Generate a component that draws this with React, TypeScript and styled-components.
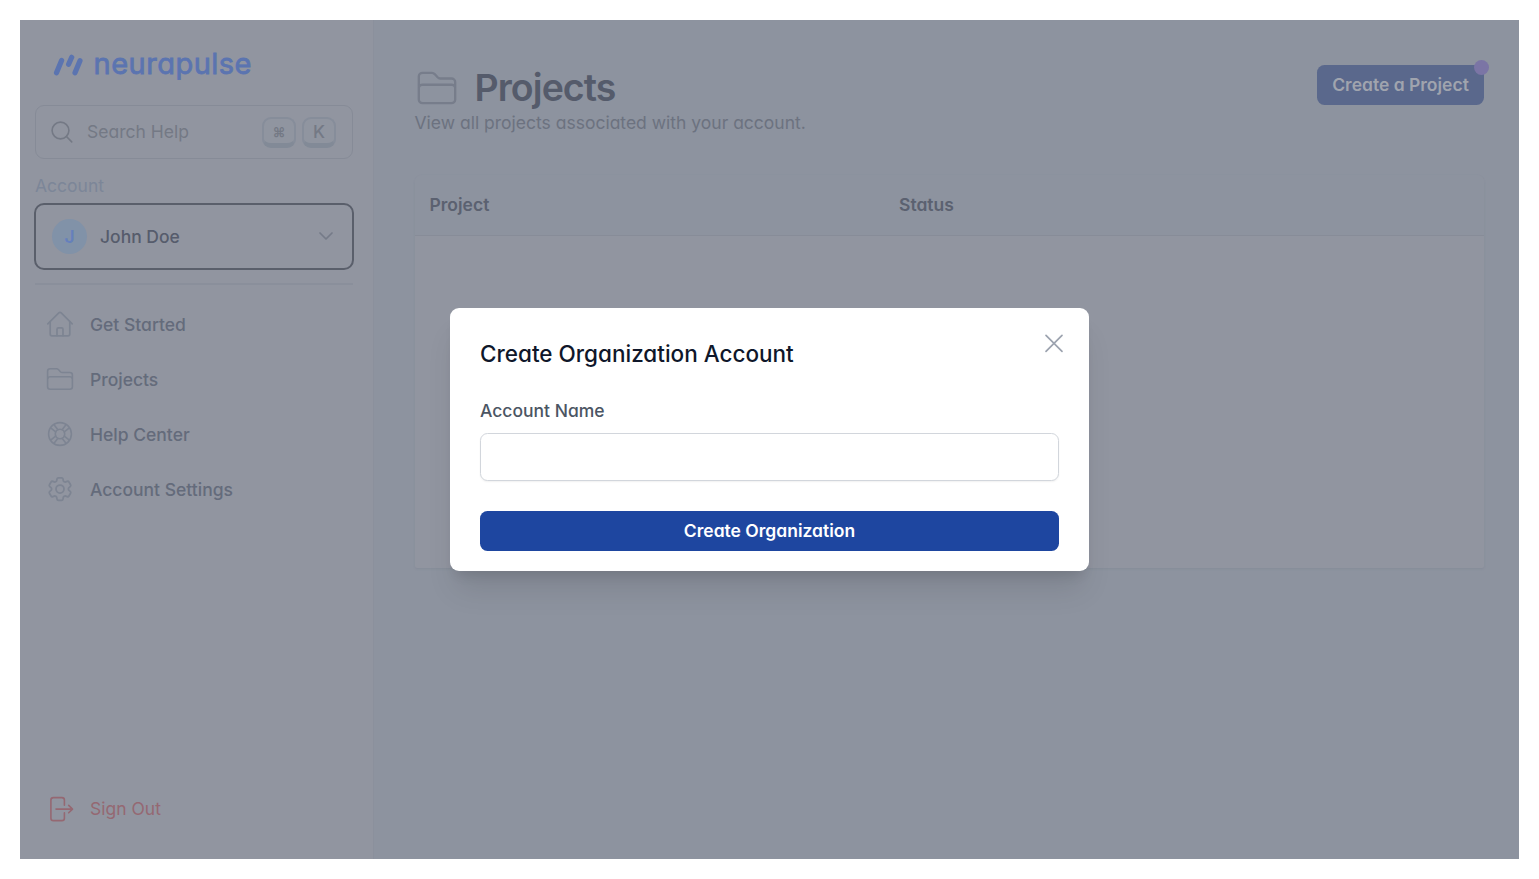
import React from 'react';
import styled, { createGlobalStyle } from 'styled-components';

const GlobalStyle = createGlobalStyle`
  *, *::before, *::after { box-sizing: border-box; }
  body {
    margin: 0;
    background: #fff;
    font-family: Inter, 'Liberation Sans', sans-serif;
    font-feature-settings: 'cv11' 1;
    font-size: 17.5px;
    line-height: 25px;
    -webkit-font-smoothing: antialiased;
  }
  button, input { font: inherit; font-feature-settings: inherit; }
`;

const Page = styled.div`
  width: 1539px;
  height: 879px;
  padding: 20px;
`;

const Frame = styled.div`
  position: relative;
  display: flex;
  height: 839px;
  background: #8d939f;
  overflow: hidden;
`;

const Sidebar = styled.aside`
  display: flex;
  flex-direction: column;
  width: 354px;
  padding: 28px 20px 32px 15px;
  background: #9195a0;
  border-right: 1px solid #8b909c;
`;

const Brand = styled.div`
  display: flex;
  align-items: center;
  gap: 11px;
  height: 34px;
  padding-left: 17.5px;
  color: #5b74b0;
`;

const BrandName = styled.span`
  margin-top: -3px;
  font-size: 29px;
  font-weight: 400;
  line-height: 34px;
  letter-spacing: 0.5px;
  -webkit-text-stroke: 0.8px currentColor;
`;

const SearchBox = styled.div`
  display: flex;
  align-items: center;
  width: 318px;
  height: 54px;
  margin-top: 23px;
  padding: 0 16px 0 15px;
  border: 1.5px solid #868b97;
  border-radius: 9px;
  color: #747985;
`;

const SearchLabel = styled.span`
  flex: 1;
  margin-top: -2px;
  padding-left: 14px;
`;

const Keys = styled.div`
  display: flex;
  gap: 6px;
`;

const Key = styled.kbd<{ $small?: boolean }>`
  display: flex;
  align-items: center;
  justify-content: center;
  width: 34px;
  height: 31px;
  padding-top: 2px;
  border: 2px solid #868d9a;
  border-bottom: 5px solid #828a97;
  border-radius: 9px;
  background: #9095a0;
  font-family: inherit;
  font-size: ${(p) => (p.$small ? '13px' : '17.5px')};
  font-weight: ${(p) => (p.$small ? 700 : 500)};
  line-height: 24px;
`;

const SectionLabel = styled.div`
  margin-top: 14px;
  color: #7c8698;
`;

const AccountSelect = styled.button`
  display: flex;
  align-items: center;
  width: 320px;
  height: 67px;
  margin: 4.5px 0 0 -1px;
  padding: 0 19px 0 16px;
  border: 2.5px solid #5a5f6b;
  border-radius: 10px;
  background: transparent;
  color: #565c6c;
  font-weight: 500;
  text-align: left;
`;

const Avatar = styled.span`
  display: flex;
  align-items: center;
  justify-content: center;
  width: 35px;
  height: 35px;
  margin-right: 13px;
  border-radius: 50%;
  background: #8192a8;
  color: #6580bc;
  font-weight: 600;
`;

const AccountName = styled.span`
  flex: 1;
`;

const Divider = styled.hr`
  width: 318px;
  height: 2px;
  margin: 13.5px 0 0;
  border: 0;
  background: #8a8f9b;
`;

const Nav = styled.nav`
  display: flex;
  flex: 1;
  flex-direction: column;
  padding: 11.5px 0 0 10px;
`;

const NavItem = styled.a<{ $danger?: boolean }>`
  display: flex;
  align-items: center;
  gap: 15px;
  height: 55px;
  color: ${(p) => (p.$danger ? '#956872' : '#646b7b')};
  font-weight: ${(p) => (p.$danger ? 400 : 500)};
  svg { color: ${(p) => (p.$danger ? '#956872' : '#7d8492')}; }
`;

const SignOutRow = styled.div`
  padding-left: 10px;
  margin-bottom: -9px;
`;

const Main = styled.main`
  flex: 1;
  padding: 45px 35px 0 40.5px;
`;

const Header = styled.header`
  display: flex;
  align-items: flex-start;
  justify-content: space-between;
  height: 110px;
`;

const TitleRow = styled.div`
  display: flex;
  align-items: center;
  gap: 16px;
  height: 45px;
  color: #777d8b;
`;

const Title = styled.h1`
  margin: 0;
  color: #555b6b;
  font-size: 37.5px;
  font-weight: 600;
  line-height: 45px;
  letter-spacing: -0.94px;
`;

const Subtitle = styled.p`
  margin: 0;
  color: #6c7280;
`;

const ButtonWrap = styled.div`
  position: relative;
`;

const CreateButton = styled.button`
  width: 167px;
  height: 40px;
  padding: 0 0 2px;
  border: 0;
  border-radius: 7.5px;
  background: #5a688c;
  color: #a0a4ae;
  font-weight: 600;
  white-space: nowrap;
`;

const Ping = styled.span`
  position: absolute;
  top: -5px;
  right: -5px;
  width: 15px;
  height: 15px;
  border-radius: 50%;
  background: #7b75a5;
`;

const Table = styled.section`
  height: 393px;
  border-radius: 7px 7px 2px 2px;
  background: #9195a0;
  box-shadow: 0 1px 2px rgba(100, 105, 120, 0.18);
  overflow: hidden;
`;

const TableHead = styled.div`
  display: grid;
  grid-template-columns: 469.5px 1fr;
  align-items: center;
  height: 61px;
  padding: 0 0 1px 15px;
  border-bottom: 1.5px solid #878c98;
  background: #8d939f;
  color: #5b6170;
  font-weight: 600;
`;

const Overlay = styled.div`
  position: absolute;
  inset: 0;
  display: flex;
  align-items: center;
  justify-content: center;
`;

const Dialog = styled.div`
  position: relative;
  display: flex;
  flex-direction: column;
  width: 639px;
  height: 263px;
  padding: 31px 30px 20px;
  border-radius: 9px;
  background: #fff;
  box-shadow: 0 24px 30px -6px rgba(0, 0, 0, 0.1), 0 10px 12px -6px rgba(0, 0, 0, 0.1);
`;

const DialogTitle = styled.h2`
  margin: 0;
  color: #0f172a;
  font-size: 22.5px;
  font-weight: 500;
  line-height: 30px;
`;

const FieldLabel = styled.label`
  margin-top: 29px;
  color: #4b5563;
  font-weight: 500;
`;

const TextInput = styled.input`
  width: 100%;
  height: 48px;
  margin-top: 10px;
  padding: 0 14px;
  border: 1.25px solid #d2d6dc;
  border-radius: 7.5px;
  background: #fff;
  box-shadow: 0 1px 2px rgba(0, 0, 0, 0.06);
`;

const SubmitButton = styled.button`
  height: 40px;
  margin-top: 30px;
  padding: 0 0 2px;
  border: 0;
  border-radius: 7.5px;
  background: #1e46a0;
  color: #fff;
  font-weight: 600;
`;

const CloseButton = styled.button`
  position: absolute;
  top: 25px;
  right: 25px;
  display: flex;
  padding: 0;
  border: 0;
  background: none;
  color: #9ca3af;
`;

const Icon = styled.svg`
  display: block;
  flex: none;
  fill: none;
  stroke: currentColor;
  stroke-linecap: round;
  stroke-linejoin: round;
`;

const LogoMark = () => (
  <Icon width="30" height="26" viewBox="0 0 30 26" strokeWidth="5.2">
    <path d="M3.500 20.800 8.600 8.500M15.600 12.300l3.100-7M22 20.800l5-12.100" />
  </Icon>
);

const SearchIcon = () => (
  <Icon width="22" height="22" viewBox="0 0 22 22" strokeWidth="1.6">
    <circle cx="9.5" cy="9.5" r="8.4" />
    <path d="m15.500 15.500 5.200 5.400" />
  </Icon>
);

const ChevronIcon = () => (
  <Icon width="14" height="8" viewBox="0 0 14 8" strokeWidth="1.7" color="#757b88">
    <path d="m1 1 6 6 6-6" />
  </Icon>
);

const HomeIcon = () => (
  <Icon width="30" height="30" viewBox="0 0 30 30" strokeWidth="1.7">
    <path d="M2.800 14.800 13.800 3.900a1.700 1.700 0 0 1 2.400 0l11 10.900" />
    <path d="M5.200 12.700v12.300c0 1 .8 1.800 1.800 1.800h16c1 0 1.800-.8 1.800-1.800V12.700" />
    <path d="M12 26.600v-6.300c0-.8.6-1.400 1.400-1.400h3.200c.8 0 1.400.6 1.400 1.400v6.300" />
  </Icon>
);

const FolderIcon = ({ size = 30 }: { size?: number }) => (
  <Icon width={size} height={size} viewBox="0 0 30 30" strokeWidth="1.6">
    <path d="M2.600 14V7.200c0-1.400 1.100-2.500 2.600-2.500h6.400c.7 0 1.300.3 1.800.8l2 2.200c.5.500 1 .8 1.700.8h7.700c1.500 0 2.600 1.100 2.600 2.500v11.800c0 1.400-1.100 2.500-2.600 2.500H5.200c-1.500 0-2.600-1.100-2.600-2.500Z" />
    <path d="M2.800 14.200c.3-.9 1.100-1.400 2.200-1.400h20c1.100 0 1.900.5 2.200 1.400" />
  </Icon>
);

const SPOKES = [0, 90, 180, 270];
const HelpIcon = () => (
  <Icon width="30" height="30" viewBox="0 0 30 30" strokeWidth="1.600">
    <circle cx="15" cy="15" r="11.400" />
    <circle cx="15" cy="15" r="4.700" />
    {SPOKES.map((a) => (
      <path key={a} transform={`rotate(${a} 15 15)`} d="m17.100 10.700 3.300-4.100M19.300 12.900l4.100-3.300" />
    ))}
  </Icon>
);

const GearIcon = () => (
  <Icon width="30" height="30" viewBox="0 0 24 24" strokeWidth="1.4">
    <path d="M9.594 3.94c.09-.542.56-.94 1.11-.94h2.593c.55 0 1.02.398 1.11.94l.213 1.281c.063.374.313.686.645.87.074.04.147.083.22.127.325.196.72.257 1.075.124l1.217-.456a1.125 1.125 0 0 1 1.37.49l1.296 2.247a1.125 1.125 0 0 1-.26 1.431l-1.003.827c-.293.241-.438.613-.43.992a7.723 7.723 0 0 1 0 .255c-.008.378.137.75.43.991l1.004.827c.424.35.534.955.26 1.43l-1.298 2.247a1.125 1.125 0 0 1-1.369.491l-1.217-.456c-.355-.133-.75-.072-1.076.124a6.47 6.47 0 0 1-.22.128c-.331.183-.581.495-.644.869l-.213 1.281c-.09.543-.56.94-1.11.94h-2.594c-.55 0-1.019-.398-1.11-.94l-.213-1.281c-.062-.374-.312-.686-.644-.87a6.52 6.52 0 0 1-.22-.127c-.325-.196-.72-.257-1.076-.124l-1.217.456a1.125 1.125 0 0 1-1.369-.49l-1.297-2.247a1.125 1.125 0 0 1 .26-1.431l1.004-.827c.292-.24.437-.613.43-.991a6.932 6.932 0 0 1 0-.255c.007-.38-.138-.751-.43-.992l-1.004-.827a1.125 1.125 0 0 1-.26-1.43l1.297-2.247a1.125 1.125 0 0 1 1.37-.491l1.216.456c.356.133.751.072 1.076-.124.072-.044.146-.086.22-.128.332-.183.582-.495.644-.869l.214-1.28Z" />
    <circle cx="12" cy="12" r="3.2" />
  </Icon>
);

const SignOutIcon = () => (
  <Icon width="30" height="30" viewBox="0 0 30 30" strokeWidth="1.6">
    <path d="M19.400 11.300V6c0-1.400-1.100-2.400-2.500-2.400H8.400C7 3.600 5.900 4.600 5.900 6v18.200c0 1.400 1.100 2.400 2.500 2.400h8.500c1.400 0 2.500-1 2.500-2.400V18.900" />
    <path d="M11 15.100h16.500M23.700 11.400l3.800 3.700-3.800 3.700" />
  </Icon>
);

const CloseIcon = () => (
  <Icon width="20" height="20" viewBox="0 0 20 20" strokeWidth="1.7">
    <path d="m2 2.300 16 16M18 2.300l-16 16" />
  </Icon>
);

export default function App() {
  return (
    <Page>
      <GlobalStyle />
      <Frame>
        <Sidebar>
          <Brand>
            <LogoMark />
            <BrandName>neurapulse</BrandName>
          </Brand>
          <SearchBox>
            <SearchIcon />
            <SearchLabel>Search Help</SearchLabel>
            <Keys>
              <Key $small>⌘</Key>
              <Key>K</Key>
            </Keys>
          </SearchBox>
          <SectionLabel>Account</SectionLabel>
          <AccountSelect>
            <Avatar>J</Avatar>
            <AccountName>John Doe</AccountName>
            <ChevronIcon />
          </AccountSelect>
          <Divider />
          <Nav>
            <NavItem><HomeIcon />Get Started</NavItem>
            <NavItem><FolderIcon />Projects</NavItem>
            <NavItem><HelpIcon />Help Center</NavItem>
            <NavItem><GearIcon />Account Settings</NavItem>
          </Nav>
          <SignOutRow>
            <NavItem $danger><SignOutIcon />Sign Out</NavItem>
          </SignOutRow>
        </Sidebar>
        <Main>
          <Header>
            <div>
              <TitleRow>
                <FolderIcon size={44} />
                <Title>Projects</Title>
              </TitleRow>
              <Subtitle>View all projects associated with your account.</Subtitle>
            </div>
            <ButtonWrap>
              <CreateButton>Create a Project</CreateButton>
              <Ping />
            </ButtonWrap>
          </Header>
          <Table>
            <TableHead>
              <span>Project</span>
              <span>Status</span>
            </TableHead>
          </Table>
        </Main>
        <Overlay>
          <Dialog role="dialog">
            <DialogTitle>Create Organization Account</DialogTitle>
            <FieldLabel htmlFor="account-name">Account Name</FieldLabel>
            <TextInput id="account-name" />
            <SubmitButton>Create Organization</SubmitButton>
            <CloseButton aria-label="Close"><CloseIcon /></CloseButton>
          </Dialog>
        </Overlay>
      </Frame>
    </Page>
  );
}
